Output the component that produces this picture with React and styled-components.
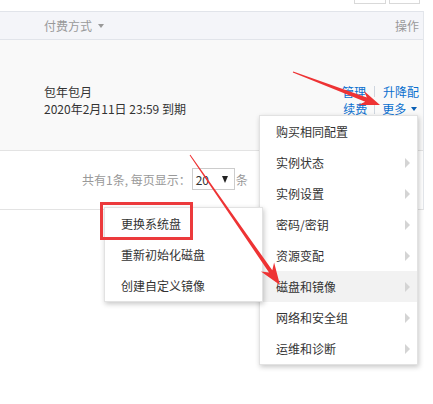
import React from "react";
import styled, { createGlobalStyle } from "styled-components";

const Global = createGlobalStyle`
  html, body { margin: 0; padding: 0; background: #fff; }
  body { font-family: "Noto Sans CJK SC", "Microsoft YaHei", sans-serif; font-size: 12px; color: #333; }
`;

const Page = styled.div`
  position: relative;
  width: 433px;
  height: 404px;
  overflow: hidden;
  background: #fff;
`;

const TopBar = styled.div`
  height: 11px;
  display: flex;
  justify-content: flex-end;
  align-items: flex-end;
  gap: 3px;
  padding: 0 13px 7px 0;
  box-sizing: border-box;
`;

const TopButton = styled.div`
  width: ${(p) => p.$w}px;
  height: 24px;
  flex: none;
  box-sizing: border-box;
  border: 1px solid #d9d9d9;
  background: #fff;
`;

const Table = styled.div`
  width: 424px;
  box-sizing: border-box;
  border-right: 1px solid #e3e6eb;
  border-bottom: 1px solid #e3e3e3;
`;

const HeaderRow = styled.div`
  height: 29px;
  box-sizing: border-box;
  border-top: 1px solid #e1e4ea;
  border-bottom: 1px solid #e1e4ea;
  background: #f4f5f9;
  display: flex;
  align-items: center;
  justify-content: space-between;
  padding: 0 4px 0 44px;
  color: #999;
  line-height: 16px;
`;

const HeadCell = styled.span`
  display: inline-flex;
  align-items: center;
  gap: 6px;
`;

const Caret = styled.span`
  display: inline-block;
  width: 0;
  height: 0;
  border-left: 3.5px solid transparent;
  border-right: 3.5px solid transparent;
  border-top: 4px solid ${(p) => p.$color || "#999"};
  margin-left: ${(p) => p.$ml || 0}px;
`;

const BodyRow = styled.div`
  height: 111px;
  box-sizing: border-box;
  background: #f9f9f9;
  border-bottom: 1px solid #e3e3e3;
  display: flex;
  align-items: center;
  justify-content: space-between;
  padding: 10px 4px 0 44px;
`;

const Lines = styled.div`
  display: flex;
  flex-direction: column;
  align-items: ${(p) => (p.$right ? "flex-end" : "flex-start")};
  line-height: 17.5px;
  color: #333;
`;

const LinkLine = styled.div`
  display: flex;
  align-items: center;
  padding-right: ${(p) => p.$pr || 0}px;
`;

const Link = styled.span`
  color: #0a6fcf;
  text-decoration: ${(p) => (p.$underline ? "underline" : "none")};
  text-underline-offset: 2px;
`;

const Divider = styled.span`
  display: inline-block;
  width: 1px;
  height: 11px;
  background: #cfd6df;
  margin: 0 ${(p) => p.$m || 8}px;
`;

const Pager = styled.div`
  height: 56px;
  display: flex;
  align-items: center;
  padding: 0 0 2px 82px;
  color: #999;
  gap: 1px;
`;

const Select = styled.div`
  width: 43px;
  height: 22px;
  box-sizing: border-box;
  border: 1px solid #ccc;
  display: flex;
  align-items: center;
  justify-content: space-between;
  padding: 0 6px 0 3px;
  color: #333;
  background: #fff;
`;

const DownTri = styled.span`
  width: 0;
  height: 0;
  border-left: 3.5px solid transparent;
  border-right: 3.5px solid transparent;
  border-top: 7px solid #222;
`;

const Menu = styled.div`
  position: absolute;
  left: ${(p) => p.$x}px;
  top: ${(p) => p.$y}px;
  width: 159px;
  box-sizing: border-box;
  background: #fff;
  border: 1px solid #e2e2e2;
  box-shadow: 1px 2px 5px rgba(0, 0, 0, 0.22);
  z-index: ${(p) => p.$z};
`;

const Item = styled.div`
  height: 31px;
  display: flex;
  align-items: center;
  justify-content: space-between;
  padding: 0 7px 0 16px;
  background: ${(p) => (p.$active ? "#f2f2f2" : "#fff")};
  color: #333;
`;

const RightTri = styled.span`
  width: 0;
  height: 0;
  border-top: 5px solid transparent;
  border-bottom: 5px solid transparent;
  border-left: 5px solid #d4d4d4;
`;

const RedBox = styled.div`
  position: absolute;
  left: 100px;
  top: 202px;
  width: 93px;
  height: 38px;
  box-sizing: border-box;
  border: 3px solid #ec3a3c;
  z-index: 5;
`;

const Overlay = styled.svg`
  position: absolute;
  left: 0;
  top: 0;
  z-index: 6;
  pointer-events: none;
`;

function arrowPoints(tx, ty, hx, hy, headLen, headHalf, tailW, shaftW) {
  const dx = hx - tx;
  const dy = hy - ty;
  const L = Math.hypot(dx, dy);
  const ux = dx / L, uy = dy / L;
  const nx = -uy, ny = ux;
  const bx = hx - ux * headLen, by = hy - uy * headLen;
  const nb = headLen * 0.25;
  const bx2 = bx + ux * nb, by2 = by + uy * nb;
  const pts = [
    [tx + nx * tailW, ty + ny * tailW],
    [bx2 + nx * shaftW, by2 + ny * shaftW],
    [bx + nx * headHalf, by + ny * headHalf],
    [hx, hy],
    [bx - nx * headHalf, by - ny * headHalf],
    [bx2 - nx * shaftW, by2 - ny * shaftW],
    [tx - nx * tailW, ty - ny * tailW],
  ];
  return pts.map((p) => p.map((v) => v.toFixed(1)).join(",")).join(" ");
}

const mainItems = [
  { t: "购买相同配置", sub: false },
  { t: "实例状态", sub: true },
  { t: "实例设置", sub: true },
  { t: "密码/密钥", sub: true },
  { t: "资源变配", sub: true },
  { t: "磁盘和镜像", sub: true, active: true },
  { t: "网络和安全组", sub: true },
  { t: "运维和诊断", sub: true },
];

const subItems = ["更换系统盘", "重新初始化磁盘", "创建自定义镜像"];

export default function App() {
  return (
    <>
      <Global />
      <Page>
        <TopBar>
          <TopButton $w={32} />
          <TopButton $w={31} />
        </TopBar>
        <Table>
          <HeaderRow>
            <HeadCell>
              付费方式 <Caret />
            </HeadCell>
            <span>操作</span>
          </HeaderRow>
          <BodyRow>
            <Lines>
              <div>包年包月</div>
              <div>2020年2月11日 23:59 到期</div>
            </Lines>
            <Lines $right>
              <LinkLine>
                <Link>管理</Link>
                <Divider />
                <Link>升降配</Link>
              </LinkLine>
              <LinkLine $pr={2}>
                <Link>续费</Link>
                <Divider $m={7} />
                <Link $underline>更多&nbsp;</Link>
                <Caret $color="#0a5fb4" $ml={2} />
              </LinkLine>
            </Lines>
          </BodyRow>
          <Pager>
            <span>共有1条, 每页显示：</span>
            <Select>
              <span>20</span>
              <DownTri />
            </Select>
            <span>条</span>
          </Pager>
        </Table>

        <Menu $x={259} $y={115} $z={3}>
          {mainItems.map((m) => (
            <Item key={m.t} $active={m.active}>
              <span>{m.t}</span>
              {m.sub && <RightTri />}
            </Item>
          ))}
        </Menu>

        <Menu $x={104} $y={207} $z={4}>
          {subItems.map((s) => (
            <Item key={s}>
              <span>{s}</span>
            </Item>
          ))}
        </Menu>

        <RedBox />

        <Overlay width="433" height="404" viewBox="0 0 433 404">
          <polygon
            fill="#ee3334"
            points={arrowPoints(293, 72, 380, 105, 20, 7.5, 0.5, 2.2)}
          />
          <polygon
            fill="#ee3334"
            points={arrowPoints(190, 155, 280, 285, 22, 8, 0.5, 2)}
          />
        </Overlay>
      </Page>
    </>
  );
}
